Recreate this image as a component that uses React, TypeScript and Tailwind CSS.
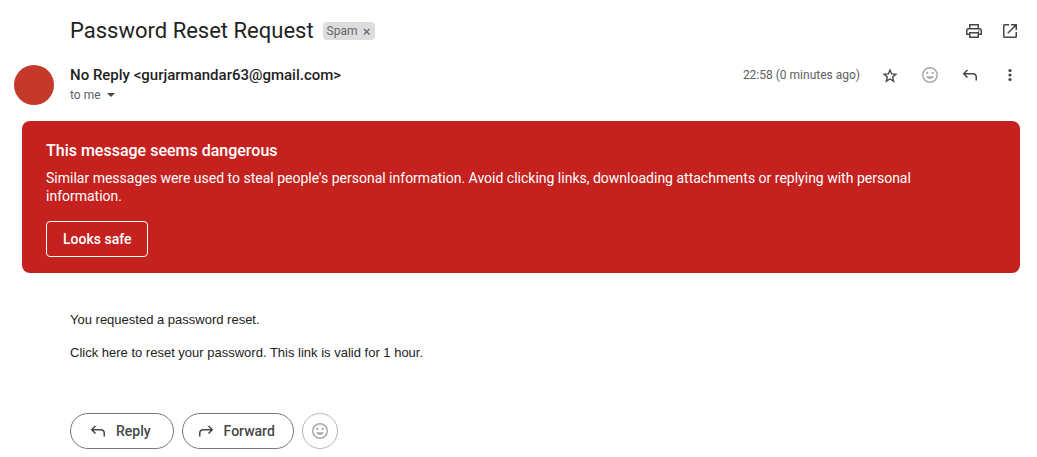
import type { ReactNode } from "react";

type IconProps = { className?: string };

function Icon({ className = "", children }: IconProps & { children: ReactNode }) {
  return (
    <svg
      viewBox="0 0 20 20"
      className={`size-5 shrink-0 ${className}`}
      fill="none"
      stroke="currentColor"
      strokeWidth="1.5"
      aria-hidden="true"
    >
      {children}
    </svg>
  );
}

const PrintIcon = () => (
  <Icon>
    <path d="M5.75 7V3.75h8.5V7M5.5 13.25H2.75V9.5c0-1 .75-1.75 1.75-1.75h11c1 0 1.75.75 1.75 1.75v3.75H14.5M5.75 11.75h8.5v4.5h-8.5z" />
    <circle cx="14.75" cy="10" r=".75" fill="currentColor" stroke="none" />
  </Icon>
);

const OpenIcon = () => (
  <Icon>
    <path d="M9 3.75H4.5a.75.75 0 0 0-.75.75v11c0 .41.34.75.75.75h11c.41 0 .75-.34.75-.75V11M11 3.75h5.25V9M16 4l-8.25 8.25" />
  </Icon>
);

const StarIcon = () => (
  <Icon>
    <path d="M10 5l1.65 3.9 4.25.36-3.22 2.8.97 4.14L10 14l-3.65 2.2.97-4.14-3.22-2.8 4.25-.36z" strokeWidth="1.4" />
  </Icon>
);

const SmileIcon = () => (
  <Icon>
    <circle cx="10" cy="10" r="7.25" />
    <g fill="currentColor" stroke="none">
      <circle cx="7.25" cy="8" r="1.15" />
      <circle cx="12.75" cy="8" r="1.15" />
      <path d="M6.25 11.25h7.5C13.2 13 11.75 14 10 14s-3.2-1-3.75-2.75z" />
    </g>
  </Icon>
);

const ReplyIcon = ({ className }: IconProps) => (
  <Icon className={className}>
    <path d="M7.5 5L3.75 8.75 7.5 12.5M4 8.75h8.75c2 0 3.5 1.5 3.5 3.5V15.5" />
  </Icon>
);

const MoreIcon = () => (
  <Icon>
    <g fill="currentColor" stroke="none">
      <circle cx="10" cy="5.5" r="1.6" />
      <circle cx="10" cy="10" r="1.6" />
      <circle cx="10" cy="14.5" r="1.6" />
    </g>
  </Icon>
);

function IconButton({ label, className = "", children }: { label: string; className?: string; children: ReactNode }) {
  return (
    <button type="button" aria-label={label} className={`flex size-5 items-center justify-center ${className}`}>
      {children}
    </button>
  );
}

export default function App() {
  return (
    <main className="bg-white pt-4 pb-2 font-['Roboto',sans-serif] text-[#1f1f1f]">
      <header className="flex items-center justify-between pr-[17px] pl-[70px]">
        <div className="flex items-center gap-[9px]">
          <h1 className="text-[22px] leading-[30px]">Password Reset Request</h1>
          <span className="flex h-[18px] items-center gap-[3px] rounded-sm bg-[#ddd] pr-[2px] pl-1 text-xs text-[#666]">
            Spam
            <button type="button" aria-label="Remove label Spam" className="flex size-3 items-center justify-center">
              <svg viewBox="0 0 12 12" className="size-3" fill="none" stroke="currentColor" strokeWidth="1.3" aria-hidden="true">
                <path d="M3 4l5.5 5.5M8.5 4L3 9.5" />
              </svg>
            </button>
          </span>
        </div>
        <div className="flex gap-4 text-[#444746]">
          <IconButton label="Print"><PrintIcon /></IconButton>
          <IconButton label="Open in new window"><OpenIcon /></IconButton>
        </div>
      </header>

      <section className="mt-[19px] flex items-start pr-[17px] pl-[14px]">
        <div className="size-10 shrink-0 rounded-full bg-[#c5392a]" />
        <div className="ml-4 flex-1">
          <h2 className="text-[15px] leading-5 font-medium">No Reply &lt;gurjarmandar63@gmail.com&gt;</h2>
          <button type="button" className="flex items-center gap-1.5 text-xs leading-5 text-[#5e5e5e]">
            to me
            <svg viewBox="0 0 8 4" className="h-1 w-2" fill="#444746" aria-hidden="true">
              <path d="M0 0h8L4 4z" />
            </svg>
          </button>
        </div>
        <div className="flex items-center gap-5 text-[#444746]">
          <time className="text-xs leading-5 text-[#5e5e5e]">22:58 (0 minutes ago)</time>
          <IconButton label="Star"><StarIcon /></IconButton>
          <IconButton label="Add reaction" className="text-[#a9aaaa]"><SmileIcon /></IconButton>
          <IconButton label="Reply"><ReplyIcon /></IconButton>
          <IconButton label="More"><MoreIcon /></IconButton>
        </div>
      </section>

      <section className="mt-4 mr-[17px] ml-[22px] rounded-lg bg-[#c5221f] px-6 pt-5 pb-4 text-white">
        <h3 className="text-base leading-5 font-medium">This message seems dangerous</h3>
        <p className="mt-2 max-w-[900px] text-sm leading-[18px]">
          Similar messages were used to steal people's personal information. Avoid clicking links, downloading
          attachments or replying with personal information.
        </p>
        <button type="button" className="mt-4 h-9 rounded-sm border border-white px-4 text-sm font-medium">
          Looks safe
        </button>
      </section>

      <article className="mt-[38px] flex flex-col gap-[15px] pl-[70px] font-['Liberation_Sans',Arial,sans-serif] text-[13px] leading-[18px] text-[#222]">
        <p>You requested a password reset.</p>
        <p>Click here to reset your password. This link is valid for 1 hour.</p>
      </article>

      <footer className="mt-[51px] flex gap-2 pl-[70px] text-sm font-medium text-[#444746]">
        <button type="button" className="flex h-9 items-center gap-2 rounded-full border border-[#747775] pr-[22px] pl-[17px]">
          <ReplyIcon />
          Reply
        </button>
        <button type="button" className="flex h-9 items-center gap-2 rounded-full border border-[#747775] pr-[18px] pl-[13px]">
          <ReplyIcon className="-scale-x-100" />
          Forward
        </button>
        <button
          type="button"
          aria-label="Add reaction"
          className="flex size-9 items-center justify-center rounded-full border border-[#b5b6b6] text-[#a9aaaa]"
        >
          <SmileIcon />
        </button>
      </footer>
    </main>
  );
}
